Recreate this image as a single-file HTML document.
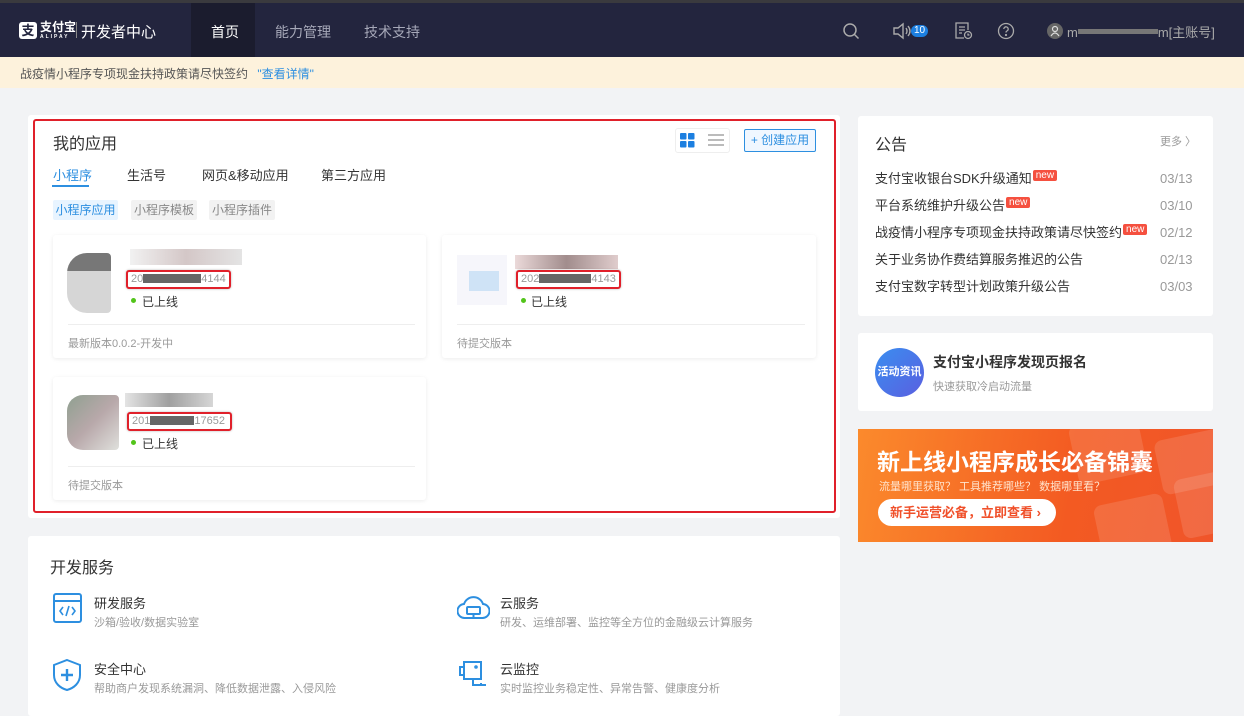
<!DOCTYPE html>
<html><head><meta charset="utf-8"><style>
*{margin:0;padding:0;box-sizing:border-box}
body{width:1244px;height:706px;overflow:hidden;background:#f2f3f5;font-family:"Liberation Sans","Noto Sans CJK SC",sans-serif;position:relative;color:#333}
.a{position:absolute;white-space:nowrap}
.hdr{left:0;top:0;width:1244px;height:57px;background:#23253e;border-top:3px solid #3a3a3e}
.nav{color:#a6a8b8;font-size:14px;top:22px}
.note{left:0;top:57px;width:1244px;height:31px;background:#fdf2dc;font-size:12px;color:#555}
.card{background:#fff;border-radius:3px}
.app{background:#fff;box-shadow:0 1px 4px rgba(0,0,0,.08);border-radius:3px}
.idbox{border:2px solid #e0202a;border-radius:3px;font-size:11px;color:#999;padding:0 3px;height:19px;line-height:15px;box-shadow:0 0 2px rgba(0,0,0,.3);overflow:hidden}
.bar{display:inline-block;background:#666;height:9px;vertical-align:-1px}
.dot{width:5px;height:5px;border-radius:50%;background:#52c41a}
.t12{font-size:12px}
.ann{left:17px;font-size:13px;color:#333;line-height:16px}
.dt{font-size:13px;color:#999;line-height:16px}
.new{display:inline-block;background:#f5503f;color:#fff;font-size:10px;line-height:11px;padding:0 3px;border-radius:2px;position:relative;top:-5px;margin-left:1px}
</style></head><body>
<div class="a hdr"></div>
<div class="a" style="left:191px;top:3px;width:64px;height:54px;background:#1b1c2e"></div>
<div class="a" style="left:19px;top:22px;width:18px;height:17px;background:#fff;border-radius:3px;color:#23253e;font-size:13px;font-weight:bold;text-align:center;line-height:17px">支</div>
<div class="a" style="left:40px;top:21px;color:#fff;font-size:12px;font-weight:bold;line-height:13px">支付宝<div style="font-size:5px;letter-spacing:2px;line-height:6px">ALIPAY</div></div>
<div class="a" style="left:76px;top:22px;width:1px;height:16px;background:#888"></div>
<div class="a" style="left:81px;top:21px;color:#fff;font-size:15px">开发者中心</div>
<div class="a nav" style="left:211px;color:#fff">首页</div>
<div class="a nav" style="left:275px">能力管理</div>
<div class="a nav" style="left:364px">技术支持</div>
<svg class="a" style="left:842px;top:22px" width="18" height="18" fill="none" stroke="#aaa" stroke-width="1.5"><circle cx="8" cy="8" r="6"/><path d="M12.5 12.5l4 4"/></svg>
<svg class="a" style="left:892px;top:22px" width="20" height="18" fill="none" stroke="#aaa" stroke-width="1.4"><path d="M2 6h4l5-4v14l-5-4H2z"/><path d="M14 6q2 3 0 6M16 4q4 5 0 10"/></svg>
<div class="a" style="left:911px;top:25px;background:#1c7fe0;color:#fff;font-size:10px;border-radius:6px;padding:0 3px;line-height:12px">10</div>
<svg class="a" style="left:954px;top:21px" width="20" height="20" fill="none" stroke="#aaa" stroke-width="1.3"><path d="M10 17H2V2h12v7"/><path d="M5 6h6M5 9h6M5 12h3"/><circle cx="14" cy="14" r="3.5"/><path d="M14 12.5v1.5h1.5"/></svg>
<svg class="a" style="left:997px;top:22px" width="18" height="18" fill="none" stroke="#aaa" stroke-width="1.3"><circle cx="9" cy="9" r="7.5"/><path d="M6.8 7a2.2 2.2 0 114 1.3c-1 .7-1.8 1-1.8 2.2"/><circle cx="9" cy="13" r=".5"/></svg>
<svg class="a" style="left:1047px;top:23px" width="16" height="16"><circle cx="8" cy="8" r="8" fill="#666"/><circle cx="8" cy="6" r="2.5" fill="none" stroke="#ddd" stroke-width="1.2"/><path d="M4 13q4-6 8 0" fill="none" stroke="#ddd" stroke-width="1.2"/></svg>
<div class="a" style="left:1067px;top:22px;color:#aaa;font-size:13px">m<span class="bar" style="width:80px;background:#777;height:5px;vertical-align:3px"></span>m[主账号]</div>

<div class="a note"><span class="a" style="left:20px;top:8px">战疫情小程序专项现金扶持政策请尽快签约 <span style="color:#2d8fe0;margin-left:6px">"查看详情"</span></span></div>

<div class="a card" style="left:28px;top:115px;width:812px;height:403px"></div>
<div class="a" style="left:33px;top:119px;width:803px;height:394px;border:2px solid #e0202a;border-radius:3px"></div>
<div class="a" style="left:53px;top:130px;font-size:16px;color:#333">我的应用</div>
<div class="a" style="left:675px;top:128px;width:55px;height:25px;border:1px solid #eee;border-radius:3px"></div>
<svg class="a" style="left:680px;top:133px" width="15" height="15" fill="#1c7fe0"><rect width="6.5" height="6.5" rx="1"/><rect x="8" width="6.5" height="6.5" rx="1"/><rect y="8" width="6.5" height="6.5" rx="1"/><rect x="8" y="8" width="6.5" height="6.5" rx="1"/></svg>
<svg class="a" style="left:708px;top:134px" width="16" height="13" fill="#bbb"><rect width="16" height="2"/><rect y="5" width="16" height="2"/><rect y="10" width="16" height="2"/></svg>
<div class="a" style="left:744px;top:129px;width:72px;height:23px;border:1px solid #2d8fe0;border-radius:2px;background:#f0f7ff;color:#2d8fe0;font-size:12px;line-height:21px;text-align:center">+ 创建应用</div>
<div class="a" style="left:53px;top:165px;font-size:13px;color:#2d8fe0">小程序</div>
<div class="a" style="left:52px;top:185px;width:37px;height:2px;background:#2d8fe0"></div>
<div class="a" style="left:127px;top:165px;font-size:13px">生活号</div>
<div class="a" style="left:202px;top:165px;font-size:13px">网页&amp;移动应用</div>
<div class="a" style="left:321px;top:165px;font-size:13px">第三方应用</div>
<div class="a t12" style="left:53px;top:200px;width:65px;height:20px;background:#e8f4ff;color:#2d8fe0;line-height:20px;text-align:center;border-radius:2px">小程序应用</div>
<div class="a t12" style="left:131px;top:200px;width:66px;height:20px;background:#f2f2f2;color:#888;line-height:20px;text-align:center;border-radius:2px">小程序模板</div>
<div class="a t12" style="left:209px;top:200px;width:66px;height:20px;background:#f2f2f2;color:#888;line-height:20px;text-align:center;border-radius:2px">小程序插件</div>

<div class="a app" style="left:53px;top:235px;width:373px;height:123px"></div>
<div class="a" style="left:67px;top:253px;width:44px;height:60px;background:linear-gradient(#555 0 30%,#ccc 30%);border-radius:20px 4px 4px 20px;opacity:.8"></div>
<div class="a" style="left:130px;top:249px;width:112px;height:16px;background:linear-gradient(90deg,#eee,#c9b9b9,#ddd);opacity:.8"></div>
<div class="a idbox" style="left:126px;top:270px;width:105px">20<span class="bar" style="width:58px"></span>4144</div>
<div class="a dot" style="left:131px;top:298px"></div>
<div class="a t12" style="left:142px;top:293px">已上线</div>
<div class="a" style="left:68px;top:324px;width:347px;height:1px;background:#eee"></div>
<div class="a" style="left:68px;top:335px;font-size:11px;color:#999">最新版本0.0.2-开发中</div>

<div class="a app" style="left:442px;top:235px;width:374px;height:123px"></div>
<div class="a" style="left:457px;top:255px;width:50px;height:50px;background:#f6f6fb"></div>
<div class="a" style="left:469px;top:271px;width:30px;height:20px;background:#cfe3f6"></div>
<div class="a" style="left:515px;top:255px;width:103px;height:14px;background:linear-gradient(90deg,#e6d0d0,#8a7070,#d8c0c0);opacity:.8"></div>
<div class="a idbox" style="left:516px;top:270px;width:105px">202<span class="bar" style="width:52px"></span>4143</div>
<div class="a dot" style="left:521px;top:298px"></div>
<div class="a t12" style="left:531px;top:293px">已上线</div>
<div class="a" style="left:457px;top:324px;width:348px;height:1px;background:#eee"></div>
<div class="a" style="left:457px;top:335px;font-size:11px;color:#999">待提交版本</div>

<div class="a app" style="left:53px;top:377px;width:373px;height:123px"></div>
<div class="a" style="left:67px;top:395px;width:52px;height:55px;background:linear-gradient(135deg,#8fa090,#b8a8aa,#dfe0dc);border-radius:16px 4px 4px 16px"></div>
<div class="a" style="left:125px;top:393px;width:88px;height:14px;background:linear-gradient(90deg,#ddd,#888,#ccc);opacity:.8"></div>
<div class="a idbox" style="left:127px;top:412px;width:105px">201<span class="bar" style="width:44px"></span>17652</div>
<div class="a dot" style="left:131px;top:440px"></div>
<div class="a t12" style="left:142px;top:435px">已上线</div>
<div class="a" style="left:68px;top:466px;width:347px;height:1px;background:#eee"></div>
<div class="a" style="left:68px;top:477px;font-size:11px;color:#999">待提交版本</div>

<div class="a card" style="left:28px;top:536px;width:812px;height:180px"></div>
<div class="a" style="left:50px;top:554px;font-size:16px">开发服务</div>
<svg class="a" style="left:53px;top:593px" width="29" height="30" fill="none" stroke="#2d8fe0" stroke-width="2"><rect x="1" y="1" width="27" height="28" rx="2"/><path d="M1 8h27"/><path d="M10 14l-3 4 3 4M19 14l3 4-3 4M16 13l-3 10" stroke-width="1.6"/></svg>
<div class="a" style="left:94px;top:593px;font-size:13px">研发服务</div>
<div class="a" style="left:94px;top:614px;font-size:11px;color:#999">沙箱/验收/数据实验室</div>
<svg class="a" style="left:457px;top:594px" width="33" height="28" fill="none" stroke="#2d8fe0" stroke-width="2"><path d="M8 24a7 7 0 01-1-14 10 10 0 0119 0 7 7 0 01-1 14z"/><rect x="10" y="13" width="13" height="7" rx="1"/><path d="M16.5 20v5"/></svg>
<div class="a" style="left:500px;top:593px;font-size:13px">云服务</div>
<div class="a" style="left:500px;top:614px;font-size:11px;color:#999">研发、运维部署、监控等全方位的金融级云计算服务</div>
<svg class="a" style="left:52px;top:659px" width="30" height="32" fill="none" stroke="#2d8fe0" stroke-width="2"><path d="M15 1l13 5v10c0 8-6 13-13 15C8 29 2 24 2 16V6z"/><path d="M15 10v12M9 16h12" stroke-width="2.4"/></svg>
<div class="a" style="left:94px;top:659px;font-size:13px">安全中心</div>
<div class="a" style="left:94px;top:680px;font-size:11px;color:#999">帮助商户发现系统漏洞、降低数据泄露、入侵风险</div>
<svg class="a" style="left:458px;top:661px" width="30" height="28" fill="none" stroke="#2d8fe0" stroke-width="2"><rect x="6" y="1" width="17" height="17"/><path d="M6 6H2v8h4M15 18v6h8v-2M23 24h5"/><circle cx="18" cy="6" r=".8"/></svg>
<div class="a" style="left:500px;top:659px;font-size:13px">云监控</div>
<div class="a" style="left:500px;top:680px;font-size:11px;color:#999">实时监控业务稳定性、异常告警、健康度分析</div>

<div class="a card" style="left:858px;top:116px;width:355px;height:200px"></div>
<div class="a" style="left:875px;top:131px;font-size:16px">公告</div>
<div class="a" style="left:1160px;top:133px;font-size:11px;color:#999">更多 〉</div>
<div class="a ann" style="left:875px;top:171px">支付宝收银台SDK升级通知<span class="new">new</span></div><div class="a dt" style="left:1160px;top:171px">03/13</div>
<div class="a ann" style="left:875px;top:198px">平台系统维护升级公告<span class="new">new</span></div><div class="a dt" style="left:1160px;top:198px">03/10</div>
<div class="a ann" style="left:875px;top:225px">战疫情小程序专项现金扶持政策请尽快签约<span class="new">new</span></div><div class="a dt" style="left:1160px;top:225px">02/12</div>
<div class="a ann" style="left:875px;top:252px">关于业务协作费结算服务推迟的公告</div><div class="a dt" style="left:1160px;top:252px">02/13</div>
<div class="a ann" style="left:875px;top:279px">支付宝数字转型计划政策升级公告</div><div class="a dt" style="left:1160px;top:279px">03/03</div>

<div class="a card" style="left:858px;top:333px;width:355px;height:78px"></div>
<div class="a" style="left:875px;top:348px;width:49px;height:49px;border-radius:50%;background:linear-gradient(135deg,#3a8ef0,#5a5fe0);color:#fff;font-size:11px;font-weight:bold;text-align:center;line-height:49px">活动资讯</div>
<div class="a" style="left:933px;top:352px;font-size:14px;font-weight:bold;color:#333">支付宝小程序发现页报名</div>
<div class="a" style="left:933px;top:378px;font-size:11px;color:#999">快速获取冷启动流量</div>

<div class="a" style="left:858px;top:429px;width:355px;height:113px;background:linear-gradient(100deg,#fb8a2c,#f35a22 60%,#f0552a);overflow:hidden">
<div class="a" style="left:215px;top:-10px;width:70px;height:60px;background:rgba(255,255,255,.12);border-radius:8px;transform:rotate(-12deg)"></div>
<div class="a" style="left:300px;top:5px;width:70px;height:55px;background:rgba(255,255,255,.12);border-radius:8px;transform:rotate(-12deg)"></div>
<div class="a" style="left:240px;top:70px;width:70px;height:60px;background:rgba(255,255,255,.12);border-radius:8px;transform:rotate(-12deg)"></div>
<div class="a" style="left:320px;top:45px;width:60px;height:60px;background:rgba(255,255,255,.12);border-radius:8px;transform:rotate(-12deg)"></div>
<div class="a" style="left:19px;top:14px;color:#fff;font-size:23px;font-weight:bold">新上线小程序成长必备锦囊</div>
<div class="a" style="left:21px;top:49px;color:#ffe3cc;font-size:11px">流量哪里获取？ 工具推荐哪些？ 数据哪里看？</div>
<div class="a" style="left:20px;top:70px;width:178px;height:27px;background:#fff;border-radius:14px;color:#f0502a;font-size:13px;font-weight:bold;line-height:27px;padding-left:12px">新手运营必备，立即查看 ›</div>
</div>
</body></html>
